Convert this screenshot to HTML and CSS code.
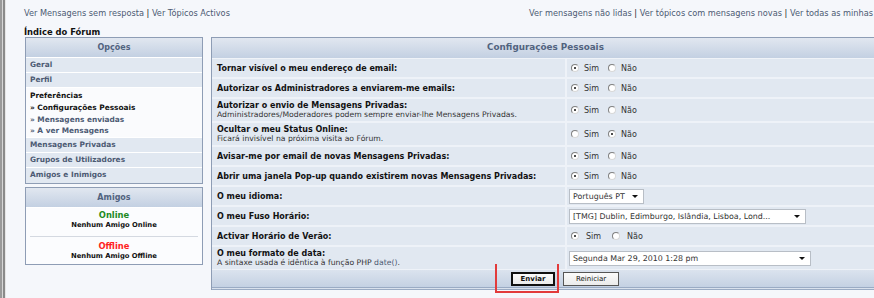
FILE: index.html
```html
<!DOCTYPE html>
<html lang="pt">
<head>
    <meta charset="UTF-8">
    <title>Índice do Fórum - Configurações Pessoais</title>
    <link rel="stylesheet" href="styles.css">
</head>
<body>
    <div class="frame">
        <div class="edge"></div>
        <div class="page">
            <div class="toplinks">
                <div class="links-left">
                    <a href="#">Ver Mensagens sem resposta</a> <span class="sep">|</span> <a href="#">Ver Tópicos Activos</a>
                </div>
                <div class="links-right">
                    <a href="#">Ver mensagens não lidas</a> <span class="sep">|</span> <a href="#">Ver tópicos com mensagens novas</a> <span class="sep">|</span> <a href="#">Ver todas as minhas</a>
                </div>
            </div>

            <div class="crumb">Índice do Fórum</div>

            <div class="layout">
                <aside class="side">
                    <div class="panel menu">
                        <div class="panel-head">Opções</div>
                        <a class="menu-row" href="#">Geral</a>
                        <a class="menu-row" href="#">Perfil</a>
                        <div class="menu-open">
                            <div class="menu-title">Preferências</div>
                            <a class="sub current" href="#">» Configurações Pessoais</a>
                            <a class="sub" href="#">» Mensagens enviadas</a>
                            <a class="sub" href="#">» A ver Mensagens</a>
                        </div>
                        <a class="menu-row" href="#">Mensagens Privadas</a>
                        <a class="menu-row" href="#">Grupos de Utilizadores</a>
                        <a class="menu-row last" href="#">Amigos e Inimigos</a>
                    </div>

                    <div class="panel friends">
                        <div class="panel-head">Amigos</div>
                        <div class="friend-group">
                            <div class="status online">Online</div>
                            <div class="friend-none">Nenhum Amigo Online</div>
                        </div>
                        <div class="friend-group">
                            <div class="status offline">Offline</div>
                            <div class="friend-none">Nenhum Amigo Offline</div>
                        </div>
                    </div>
                </aside>

                <main class="panel prefs">
                    <div class="panel-head">Configurações Pessoais</div>

                    <div class="row">
                        <div class="label"><b>Tornar visível o meu endereço de email:</b></div>
                        <div class="value"><span class="radio on"></span>Sim <span class="radio"></span>Não</div>
                    </div>
                    <div class="row">
                        <div class="label"><b>Autorizar os Administradores a enviarem-me emails:</b></div>
                        <div class="value"><span class="radio on"></span>Sim <span class="radio"></span>Não</div>
                    </div>
                    <div class="row tall">
                        <div class="label"><b>Autorizar o envio de Mensagens Privadas:</b><small>Administradores/Moderadores podem sempre enviar-lhe Mensagens Privadas.</small></div>
                        <div class="value"><span class="radio on"></span>Sim <span class="radio"></span>Não</div>
                    </div>
                    <div class="row tall">
                        <div class="label"><b>Ocultar o meu Status Online:</b><small>Ficará invisível na próxima visita ao Fórum.</small></div>
                        <div class="value"><span class="radio"></span>Sim <span class="radio on"></span>Não</div>
                    </div>
                    <div class="row">
                        <div class="label"><b>Avisar-me por email de novas Mensagens Privadas:</b></div>
                        <div class="value"><span class="radio on"></span>Sim <span class="radio"></span>Não</div>
                    </div>
                    <div class="row">
                        <div class="label"><b>Abrir uma janela Pop-up quando existirem novas Mensagens Privadas:</b></div>
                        <div class="value"><span class="radio on"></span>Sim <span class="radio"></span>Não</div>
                    </div>
                    <div class="row">
                        <div class="label"><b>O meu idioma:</b></div>
                        <div class="value"><div class="select lang">Português PT<span class="arrow"></span></div></div>
                    </div>
                    <div class="row">
                        <div class="label"><b>O meu Fuso Horário:</b></div>
                        <div class="value"><div class="select zone">[TMG] Dublin, Edimburgo, Islândia, Lisboa, Lond...<span class="arrow"></span></div></div>
                    </div>
                    <div class="row">
                        <div class="label"><b>Activar Horário de Verão:</b></div>
                        <div class="value wide"><span class="radio on"></span>Sim <span class="radio"></span>Não</div>
                    </div>
                    <div class="row tall">
                        <div class="label"><b>O meu formato de data:</b><small>A sintaxe usada é idêntica à função PHP <a href="#">date()</a>.</small></div>
                        <div class="value"><div class="select date">Segunda Mar 29, 2010 1:28 pm<span class="arrow"></span></div></div>
                    </div>

                    <div class="panel-foot">
                        <button class="btn primary" type="submit">Enviar</button>
                        <button class="btn" type="reset">Reiniciar</button>
                        <div class="mark"></div>
                    </div>
                </main>
            </div>
        </div>
    </div>
</body>
</html>
```

FILE: styles.css
```css
:root {
    --page-bg: #f5f7fb;
    --row-bg: #e1e8f1;
    --row-gap: #eef2f8;
    --border: #8e9db5;
    --head-text: #51637f;
    --link: #4c5a73;
}

* {
    margin: 0;
    padding: 0;
    box-sizing: border-box;
}

body {
    background: var(--page-bg);
    font-family: "DejaVu Sans", Verdana, sans-serif;
    font-size: 8px;
    color: #222;
    overflow: hidden;
}

a {
    color: var(--link);
    text-decoration: none;
}

.frame {
    display: flex;
    width: 874px;
    height: 298px;
}

.edge {
    width: 6px;
    flex: none;
    background: linear-gradient(to right, #9a9a9a 0 2px, #d6d6d6 2px 3px, #8a8a8a 3px 5px, #e6e6e6 5px 6px);
}

.page {
    flex: 1;
    min-width: 0;
    padding-left: 18px;
}

/* liens du haut */
.toplinks {
    display: flex;
    justify-content: space-between;
    padding: 8px 1px 0 0;
    height: 22px;
    font-size: 8.2px;
    white-space: nowrap;
}

.toplinks .sep {
    color: #222;
}

.crumb {
    font-weight: bold;
    font-size: 8.4px;
    color: #111;
    height: 15px;
    padding-top: 5px;
    line-height: 10px;
}

.layout {
    display: flex;
    gap: 8px;
    padding-left: 1px;
}

.side {
    width: 178px;
    flex: none;
    display: flex;
    flex-direction: column;
    gap: 3px;
}

.panel {
    border: 1px solid var(--border);
    background: #fbfcfe;
}

.panel-head {
    height: 20px;
    line-height: 19px;
    text-align: center;
    font-weight: bold;
    color: var(--head-text);
    background: linear-gradient(#e1e7f0, #c3d0e2);
    border-bottom: 1px solid #ffffff;
}

/* menu gauche */
.menu-row {
    display: block;
    height: 15px;
    line-height: 14px;
    padding-left: 4px;
    font-weight: bold;
    font-size: 7.4px;
    background: var(--row-bg);
    border-bottom: 1px solid #ffffff;
}

.menu-row.last {
    border-bottom: 0;
}

.menu-open {
    height: 50px;
    padding: 3px 4px 0;
    background: #fafbfd;
    border-bottom: 1px solid #ffffff;
    font-weight: bold;
    font-size: 7.4px;
}

.menu-title {
    color: #111;
    height: 12px;
}

.sub {
    display: block;
    height: 11.5px;
}

.sub.current {
    color: #111;
}

/* amis */
.friends {
    height: 78px;
}

.friend-group {
    text-align: center;
    margin: 0 4px;
    padding-top: 2px;
    height: 28px;
}

.friend-group + .friend-group {
    border-top: 1px solid #d4d9e1;
    padding-top: 4px;
}

.status {
    font-weight: bold;
    font-size: 8.4px;
    height: 11px;
}

.online {
    color: #1e8a1e;
}

.offline {
    color: #ff1f1f;
}

.friend-none {
    font-weight: bold;
    font-size: 6.8px;
    color: #111;
}

/* panneau principal */
.prefs {
    width: 668px;
    flex: none;
    border-right: 0;
    border-bottom: 0;
    position: relative;
    background: var(--row-gap);
}

.prefs .panel-head {
    height: 21px;
    line-height: 19px;
    border-bottom: 1px solid #f0f3f8;
    font-size: 8.8px;
}

.row {
    display: grid;
    grid-template-columns: 353px 1fr;
    column-gap: 2px;
    height: 18px;
    margin-bottom: 2px;
}

.row.tall {
    height: 22px;
}

.label,
.value {
    background: var(--row-bg);
    display: flex;
    flex-direction: column;
    justify-content: center;
}

.label {
    padding-left: 5px;
}

.label b {
    font-size: 8px;
    color: #111;
    white-space: nowrap;
}

.label small {
    font-size: 7.7px;
    color: #333;
    white-space: nowrap;
    line-height: 9px;
}

.value {
    flex-direction: row;
    align-items: center;
    justify-content: flex-start;
    padding-left: 4px;
    font-size: 8px;
    color: #333;
}

.radio {
    width: 8px;
    height: 8px;
    border-radius: 50%;
    border: 1px solid #808080;
    border-right-color: #d8d8d8;
    border-bottom-color: #d8d8d8;
    background: #ffffff;
    margin-right: 5px;
    position: relative;
    flex: none;
}

.value .radio:nth-of-type(2) {
    margin-left: 9px;
}

.value.wide .radio {
    margin-right: 7px;
}

.value.wide .radio:nth-of-type(2) {
    margin-left: 11px;
}

.radio.on::after {
    content: '';
    position: absolute;
    left: 2px;
    top: 2px;
    width: 2px;
    height: 2px;
    border-radius: 50%;
    background: #111;
}

.select {
    position: relative;
    height: 15px;
    line-height: 13px;
    padding-left: 3px;
    border: 1px solid #b8bec6;
    background: #ffffff;
    color: #333;
    font-size: 7.9px;
    white-space: nowrap;
    margin-left: -2px;
}

.select.lang { width: 75px; }
.select.zone { width: 237px; }
.select.date { width: 242px; }

.arrow {
    position: absolute;
    right: 5px;
    top: 5px;
    border-left: 3px solid transparent;
    border-right: 3px solid transparent;
    border-top: 3px solid #111;
}

.panel-foot {
    height: 20px;
    display: flex;
    align-items: center;
    gap: 8px;
    padding: 1px 0 0 299px;
    background: linear-gradient(#dbe3ee, #c4d1e3);
    border-bottom: 3px double #9aabc4;
    margin-top: -1px;
}

.btn {
    height: 14px;
    font-family: "DejaVu Sans", Verdana, sans-serif;
    font-size: 7px;
    color: #111;
    background: linear-gradient(#fbfbfb, #ebebeb);
    border: 1px solid #555;
    padding: 0 12px;
}

.btn.primary {
    border: 2px solid #111;
    font-weight: bold;
    width: 44px;
    padding: 0;
}

/* cadre rouge d'annotation */
.mark {
    position: absolute;
    left: 283px;
    bottom: -3px;
    width: 64px;
    height: 29px;
    border: 2px solid #e23b3b;
    border-top: 0;
}
```
